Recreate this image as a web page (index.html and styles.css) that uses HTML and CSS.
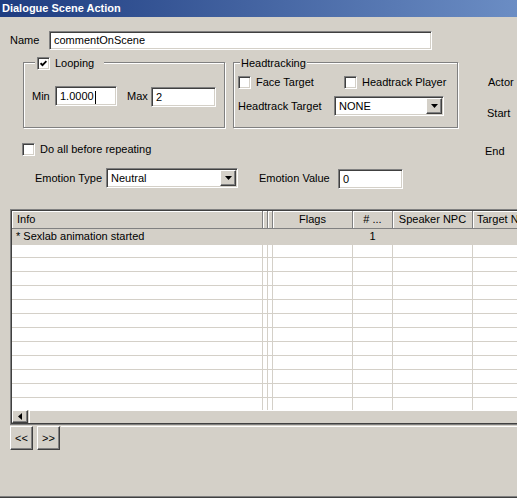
FILE: index.html
```html
<!DOCTYPE html>
<html lang="en">
<head>
    <meta charset="UTF-8">
    <title>Dialogue Scene Action</title>
    <link rel="stylesheet" href="styles.css">
</head>
<body>
<div class="window">
    <div class="titlebar">Dialogue Scene Action</div>

    <div class="name-row">
        <span class="name-label">Name</span>
        <div class="field name-field">commentOnScene</div>
    </div>

    <div class="upper">
        <div class="upper-left">
            <div class="groups">
                <div class="group looping">
                    <div class="group-title">
                        <span class="check"><svg width="7" height="7" viewBox="0 0 7 7"><path d="M0.6 3.2 L2.5 5.2 L6.4 1.2" fill="none" stroke="#000" stroke-width="1.8"/></svg></span>
                        Looping
                    </div>
                    <div class="range-row">
                        <span class="min-label">Min</span>
                        <div class="field min-field">1.0000<span class="caret"></span></div>
                        <span class="max-label">Max</span>
                        <div class="field max-field">2</div>
                    </div>
                </div>

                <div class="group headtracking">
                    <div class="group-title">Headtracking</div>
                    <div class="check-row">
                        <label class="check-item face-item"><span class="check"></span>Face Target</label>
                        <label class="check-item"><span class="check"></span>Headtrack Player</label>
                    </div>
                    <div class="target-row">
                        <span class="target-label">Headtrack Target</span>
                        <div class="combo target-combo">
                            <span>NONE</span>
                            <span class="combo-btn"><svg width="7" height="4" viewBox="0 0 7 4"><path d="M0 0h7L3.5 4z"/></svg></span>
                        </div>
                    </div>
                </div>
            </div>

            <label class="check-item repeat-item"><span class="check"></span>Do all before repeating</label>

            <div class="emotion-row">
                <span class="emotion-label">Emotion Type</span>
                <div class="combo emotion-combo">
                    <span>Neutral</span>
                    <span class="combo-btn"><svg width="7" height="4" viewBox="0 0 7 4"><path d="M0 0h7L3.5 4z"/></svg></span>
                </div>
                <span class="value-label">Emotion Value</span>
                <div class="field value-field">0</div>
            </div>
        </div>

        <div class="upper-right">
            <span class="actor-label">Actor</span>
            <span class="start-label">Start</span>
            <span class="end-label">End</span>
        </div>
    </div>

    <div class="list">
        <div class="list-inner">
            <div class="list-head">
                <span class="col-info">Info</span>
                <span></span>
                <span></span>
                <span>Flags</span>
                <span># ...</span>
                <span>Speaker NPC</span>
                <span class="col-target">Target NPC</span>
            </div>
            <div class="list-body">
                <div class="list-row selected">
                    <span class="col-info">* Sexlab animation started</span>
                    <span></span><span></span><span></span>
                    <span>1</span>
                    <span></span><span></span>
                </div>
                <div class="list-row"><span></span><span></span><span></span><span></span><span></span><span></span><span></span></div>
                <div class="list-row"><span></span><span></span><span></span><span></span><span></span><span></span><span></span></div>
                <div class="list-row"><span></span><span></span><span></span><span></span><span></span><span></span><span></span></div>
                <div class="list-row"><span></span><span></span><span></span><span></span><span></span><span></span><span></span></div>
                <div class="list-row"><span></span><span></span><span></span><span></span><span></span><span></span><span></span></div>
                <div class="list-row"><span></span><span></span><span></span><span></span><span></span><span></span><span></span></div>
                <div class="list-row"><span></span><span></span><span></span><span></span><span></span><span></span><span></span></div>
                <div class="list-row"><span></span><span></span><span></span><span></span><span></span><span></span><span></span></div>
                <div class="list-row"><span></span><span></span><span></span><span></span><span></span><span></span><span></span></div>
                <div class="list-row"><span></span><span></span><span></span><span></span><span></span><span></span><span></span></div>
                <div class="list-row"><span></span><span></span><span></span><span></span><span></span><span></span><span></span></div>
                <div class="list-row"><span></span><span></span><span></span><span></span><span></span><span></span><span></span></div>
            </div>
            <div class="hscroll">
                <span class="scroll-btn"><svg width="4" height="7" viewBox="0 0 4 7"><path d="M4 0v7L0 3.5z"/></svg></span>
                <span class="scroll-thumb"></span>
            </div>
        </div>
    </div>

    <div class="bottom-panel">
        <button class="nav-btn">&lt;&lt;</button>
        <button class="nav-btn">&gt;&gt;</button>
        <span class="panel-line"></span>
    </div>
</div>
</body>
</html>
```

FILE: styles.css
```css
body {
    margin: 0;
    background-color: #d4d0c8;
    font-family: "Liberation Sans", Arial, sans-serif;
    font-size: 11px;
    line-height: 13px;
    color: #000;
}
.window {
    width: 517px;
    height: 498px;
    overflow: hidden;
    display: flex;
    flex-direction: column;
}
.titlebar {
    flex-shrink: 0;
    height: 17px;
    line-height: 17px;
    padding-left: 2px;
    color: #fff;
    font-weight: bold;
    background: linear-gradient(to right, #1e3c80, #6b8dc4);
}

/* sunken white boxes: text fields, combos, checkboxes */
.field,
.combo,
.check {
    box-sizing: border-box;
    background-color: #fff;
    border: 1px solid;
    border-color: #808080 #fff #fff #808080;
    box-shadow: inset 1px 1px 0 #404040, inset -1px -1px 0 #d4d0c8;
}
.field {
    height: 20px;
    line-height: 18px;
    padding-left: 4px;
    white-space: nowrap;
}
.check {
    display: inline-flex;
    align-items: center;
    justify-content: center;
    flex-shrink: 0;
    width: 13px;
    height: 13px;
}
.combo {
    display: flex;
    align-items: center;
    height: 20px;
    padding-left: 4px;
}

/* raised grey buttons */
.combo-btn,
.scroll-btn,
.scroll-thumb,
.nav-btn {
    box-sizing: border-box;
    background-color: #d4d0c8;
    border: 1px solid;
    border-color: #fff #404040 #404040 #fff;
    box-shadow: inset -1px -1px 0 #808080;
}
.combo-btn {
    display: flex;
    align-items: center;
    justify-content: center;
    width: 16px;
    height: 16px;
    margin-left: auto;
    margin-right: 1px;
}

.name-row {
    display: flex;
    margin-top: 14px;
    padding-left: 10px;
}
.name-label {
    width: 39px;
    line-height: 19px;
}
.name-field {
    width: 383px;
    height: 19px;
    line-height: 17px;
}

.upper {
    display: flex;
}
.upper-left {
    width: 484px;
}
.upper-right {
    display: flex;
    flex-direction: column;
}
.actor-label {
    margin: 26px 0 0 4px;
}
.start-label {
    margin: 18px 0 0 3px;
}
.end-label {
    margin: 25px 0 0 1px;
}

.groups {
    display: flex;
    gap: 8px;
    margin-top: 12px;
    padding-left: 23px;
}
.group {
    position: relative;
    box-sizing: border-box;
    height: 66px;
    border: 1px solid #808080;
    box-shadow: 1px 1px 0 #fff, inset 1px 1px 0 #fff;
}
.group-title {
    position: absolute;
    top: -6px;
    display: flex;
    align-items: center;
    gap: 5px;
    background-color: #d4d0c8;
}
.looping {
    width: 202px;
    padding: 23px 0 0 8px;
}
.looping .group-title {
    left: 11px;
    padding: 0 10px 0 2px;
}
.headtracking {
    width: 225px;
    padding: 13px 0 0 4px;
}
.headtracking .group-title {
    left: 6px;
    padding: 0 1px;
}

.range-row {
    display: flex;
    align-items: flex-start;
}
.min-label {
    width: 23px;
    line-height: 20px;
}
.min-field {
    width: 62px;
}
.caret {
    display: inline-block;
    width: 1px;
    height: 13px;
    margin-left: 1px;
    vertical-align: middle;
    background-color: #000;
}
.max-label {
    width: 24px;
    margin-left: 10px;
    line-height: 20px;
}
.max-field {
    width: 65px;
    margin-top: 1px;
}

.check-row {
    display: flex;
}
.check-item {
    display: flex;
    align-items: center;
    gap: 5px;
    height: 13px;
}
.face-item {
    width: 106px;
}
.target-row {
    display: flex;
    align-items: center;
    margin-top: 7px;
}
.target-label {
    width: 96px;
}
.target-combo {
    width: 110px;
}

.repeat-item {
    margin: 15px 0 0 22px;
}

.emotion-row {
    display: flex;
    align-items: flex-start;
    margin-top: 12px;
    padding-left: 35px;
}
.emotion-label {
    width: 71px;
    line-height: 20px;
}
.emotion-combo {
    width: 132px;
}
.value-label {
    width: 79px;
    margin-left: 21px;
    line-height: 20px;
}
.value-field {
    width: 65px;
    margin-top: 1px;
}

/* list view */
.list {
    flex-shrink: 0;
    width: 580px;
    margin: 20px 0 0 10px;
    border-top: 1px solid #808080;
    border-left: 1px solid #808080;
    border-bottom: 1px solid #808080;
}
.list-inner {
    border-top: 1px solid #404040;
    border-left: 1px solid #404040;
    border-bottom: 1px solid #404040;
}
.list-head,
.list-row {
    display: grid;
    grid-template-columns: 251px 5px 5px 80px 40px 80px 100px;
}
.list-head {
    height: 18px;
}
.list-head span {
    box-sizing: border-box;
    border-right: 1px solid #808080;
    border-bottom: 1px solid #808080;
    box-shadow: inset 1px 1px 0 #fff;
    line-height: 17px;
    text-align: center;
    white-space: nowrap;
    overflow: hidden;
}
.list-head .col-info {
    padding-left: 5px;
    text-align: left;
}
.list-head .col-target {
    padding-left: 4px;
    text-align: left;
}
.list-body {
    height: 181px;
    overflow: hidden;
    background-color: #fff;
}
.list-row {
    height: 14px;
}
.list-row span {
    box-sizing: border-box;
    border-right: 1px solid #d4d0c8;
    border-bottom: 1px solid #d4d0c8;
    line-height: 13px;
    text-align: center;
    white-space: nowrap;
}
.list-row .col-info {
    padding-left: 4px;
    text-align: left;
}
.list-row.selected {
    height: 15px;
    background-color: #d4d0c8;
}
.list-row.selected span {
    border-color: #d4d0c8;
    line-height: 15px;
}
.hscroll {
    display: flex;
    height: 13px;
}
.scroll-btn {
    display: flex;
    align-items: center;
    justify-content: center;
    width: 16px;
    height: 13px;
}
.scroll-thumb {
    flex: 1;
    margin-left: 1px;
    border-bottom: none;
    border-right: none;
    box-shadow: none;
}

/* bottom button strip */
.bottom-panel {
    flex: 1;
    display: flex;
    align-items: flex-start;
    margin-top: 1px;
    padding-left: 10px;
    border-bottom: 1px solid #404040;
    box-shadow: inset 0 -1px 0 #808080;
}
.nav-btn {
    width: 23px;
    height: 24px;
    margin-right: 4px;
    padding: 0;
    font-family: "Liberation Sans", Arial, sans-serif;
    font-size: 11px;
    color: #000;
}
.panel-line {
    flex: 1;
    margin-left: -3px;
    border-top: 1px solid #fff;
}
```
